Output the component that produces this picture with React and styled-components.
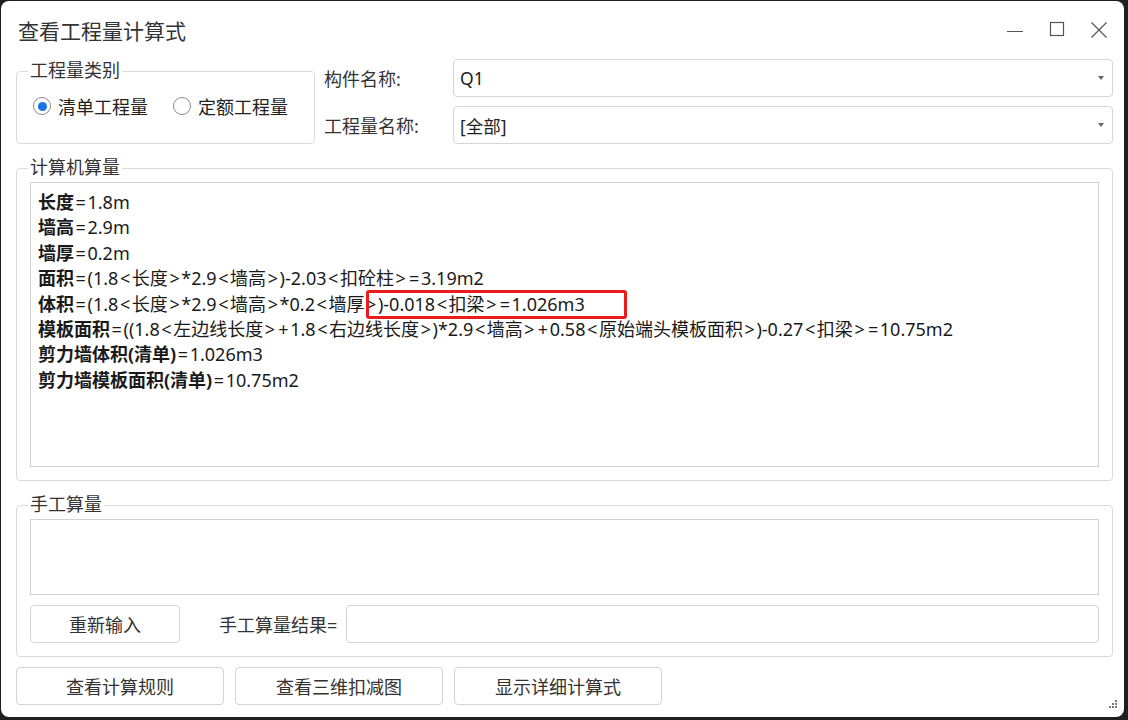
import React from "react"
import styled, { createGlobalStyle } from "styled-components"

const GlobalStyle = createGlobalStyle`
  html, body {
    margin: 0;
    padding: 0;
    background: #1f1f1f;
  }
  body {
    font-family: "Noto Sans", "Noto Sans CJK SC", sans-serif;
    color: #222;
  }
  * {
    box-sizing: border-box;
  }
`

const Window = styled.div`
  margin: 1px 0 0 1px;
  width: 1123px;
  height: 716px;
  background: #fff;
  border-radius: 8px;
  display: flex;
  flex-direction: column;
  position: relative;
  overflow: hidden;
`

const TitleBar = styled.div`
  height: 58px;
  display: flex;
  align-items: center;
  padding-left: 17px;
`

const Title = styled.div`
  flex: 1;
  font-size: 21px;
  color: #333;
`

const Controls = styled.div`
  display: flex;
  align-items: center;
  height: 100%;
  padding-right: 4px;
`

const ControlButton = styled.div`
  width: 42px;
  height: 100%;
  display: flex;
  align-items: center;
  justify-content: center;
  color: #555;
`

const Body = styled.div`
  flex: 1;
  display: flex;
  flex-direction: column;
  padding: 0 11px 0 15px;
`

const TopRow = styled.div`
  display: flex;
  height: 85px;
`

const GroupBox = styled.div`
  position: relative;
  border: 1px solid #dadada;
  border-radius: 4px;
  margin-top: ${p => p.$top || 0}px;
  width: ${p => (p.$width ? `${p.$width}px` : "auto")};
  height: ${p => p.$height}px;
  padding: 13px;
  display: flex;
  flex-direction: column;
  gap: 10px;
`

const Legend = styled.span`
  position: absolute;
  top: -13px;
  left: 11px;
  padding: 0 2px;
  background: #fff;
  font-size: 18px;
  line-height: 22px;
  color: #333;
`

const RadioRow = styled.div`
  display: flex;
  align-items: center;
  gap: 25px;
  padding: 8px 0 0 3px;
`

const RadioLabel = styled.label`
  display: flex;
  align-items: center;
  gap: 7px;
  font-size: 18px;
  color: #222;
`

const RadioCircle = styled.span`
  width: 18px;
  height: 18px;
  border-radius: 50%;
  border: 1.5px solid #8a8a8a;
  display: flex;
  align-items: center;
  justify-content: center;
  &::after {
    content: "";
    width: 9px;
    height: 9px;
    border-radius: 50%;
    background: ${p => (p.$on ? "#1a73e8" : "transparent")};
  }
`

const FieldGrid = styled.div`
  flex: 1;
  margin-left: 9px;
  display: grid;
  grid-template-columns: 129px 1fr;
  grid-auto-rows: 38px;
  row-gap: 9px;
  align-items: center;
`

const FieldLabel = styled.span`
  font-size: 18px;
  color: #333;
`

const Combo = styled.div`
  height: 38px;
  border: 1px solid #d6d6d6;
  border-radius: 4px;
  display: flex;
  align-items: center;
  padding: 0 8px 0 6px;
  font-size: 17.5px;
  color: #222;
`

const ComboText = styled.span`
  flex: 1;
`

const Arrow = styled.span`
  width: 0;
  height: 0;
  border-left: 3.5px solid transparent;
  border-right: 3.5px solid transparent;
  border-top: 4px solid #666;
`

const Spacer = styled.div`
  height: ${p => p.$h}px;
  flex-shrink: 0;
`

const TextArea = styled.div`
  position: relative;
  border: 1px solid #d2d2d2;
  height: ${p => p.$height}px;
  padding: 7px 7px;
  font-size: 18px;
  line-height: 25.4px;
  color: #1a1a1a;
`

const Line = styled.div`
  white-space: nowrap;
`

const Bold = styled.b`
  font-weight: 700;
`

const Op = styled.span`
  margin: 0 1.6px;
`

const Highlight = styled.div`
  position: absolute;
  left: 335px;
  top: 107px;
  width: 261px;
  height: 29px;
  border: 3px solid #ec1c1c;
  border-radius: 3px;
`

const ActionRow = styled.div`
  display: flex;
  align-items: center;
  height: 38px;
`

const Button = styled.div`
  width: ${p => p.$width}px;
  height: 38px;
  border: 1px solid #d4d4d4;
  border-radius: 4px;
  display: flex;
  align-items: center;
  justify-content: center;
  font-size: 18px;
  color: #333;
  background: #fff;
  flex-shrink: 0;
`

const ResultLabel = styled.span`
  margin: 0 9px 0 39px;
  font-size: 18px;
  color: #333;
`

const Input = styled.div`
  flex: 1;
  height: 38px;
  border: 1px solid #d4d4d4;
  border-radius: 4px;
`

const ButtonRow = styled.div`
  display: flex;
  gap: 11px;
`

const Grip = styled.svg`
  position: absolute;
  right: 6px;
  bottom: 6px;
`

const lines = [
  ["长度", "=1.8m"],
  ["墙高", "=2.9m"],
  ["墙厚", "=0.2m"],
  ["面积", "=(1.8<长度>*2.9<墙高>)-2.03<扣砼柱>=3.19m2"],
  ["体积", "=(1.8<长度>*2.9<墙高>*0.2<墙厚>)-0.018<扣梁>=1.026m3"],
  ["模板面积", "=((1.8<左边线长度>+1.8<右边线长度>)*2.9<墙高>+0.58<原始端头模板面积>)-0.27<扣梁>=10.75m2"],
  ["剪力墙体积(清单)", "=1.026m3"],
  ["剪力墙模板面积(清单)", "=10.75m2"],
]

const Formula = ({ text }) =>
  text.split(/([<>=+])/).map((part, i) =>
    /^[<>=+]$/.test(part) ? <Op key={i}>{part}</Op> : part
  )

export default function App() {
  return (
    <>
      <GlobalStyle />
      <Window>
        <TitleBar>
          <Title>查看工程量计算式</Title>
          <Controls>
            <ControlButton>
              <svg width="18" height="18" viewBox="0 0 18 18">
                <line x1="1" y1="10.5" x2="17" y2="10.5" stroke="#555" strokeWidth="1.2" />
              </svg>
            </ControlButton>
            <ControlButton>
              <svg width="18" height="18" viewBox="0 0 18 18">
                <rect x="2.5" y="1.5" width="13" height="13" fill="none" stroke="#555" strokeWidth="1.2" />
              </svg>
            </ControlButton>
            <ControlButton>
              <svg width="18" height="18" viewBox="0 0 18 18">
                <path d="M1.5 1.5 L16.5 16.5 M16.5 1.5 L1.5 16.5" stroke="#555" strokeWidth="1.2" />
              </svg>
            </ControlButton>
          </Controls>
        </TitleBar>
        <Body>
          <TopRow>
            <GroupBox $top={12} $width={299} $height={73}>
              <Legend>工程量类别</Legend>
              <RadioRow>
                <RadioLabel>
                  <RadioCircle $on />
                  清单工程量
                </RadioLabel>
                <RadioLabel>
                  <RadioCircle />
                  定额工程量
                </RadioLabel>
              </RadioRow>
            </GroupBox>
            <FieldGrid>
              <FieldLabel>构件名称:</FieldLabel>
              <Combo>
                <ComboText>Q1</ComboText>
                <Arrow />
              </Combo>
              <FieldLabel>工程量名称:</FieldLabel>
              <Combo>
                <ComboText>[全部]</ComboText>
                <Arrow />
              </Combo>
            </FieldGrid>
          </TopRow>
          <Spacer $h={24} />
          <GroupBox $height={313}>
            <Legend>计算机算量</Legend>
            <TextArea $height={285}>
              {lines.map(([k, v]) => (
                <Line key={k}>
                  <Bold>{k}</Bold>
                  <Formula text={v} />
                </Line>
              ))}
              <Highlight />
            </TextArea>
          </GroupBox>
          <Spacer $h={24} />
          <GroupBox $height={152}>
            <Legend>手工算量</Legend>
            <TextArea $height={76} />
            <ActionRow>
              <Button $width={150}>重新输入</Button>
              <ResultLabel>手工算量结果=</ResultLabel>
              <Input />
            </ActionRow>
          </GroupBox>
          <Spacer $h={10} />
          <ButtonRow>
            <Button $width={208}>查看计算规则</Button>
            <Button $width={208}>查看三维扣减图</Button>
            <Button $width={208}>显示详细计算式</Button>
          </ButtonRow>
        </Body>
        <Grip width="12" height="12" viewBox="0 0 12 12">
          <g fill="#777">
            <rect x="9" y="1" width="2" height="2" />
            <rect x="6" y="4" width="2" height="2" />
            <rect x="9" y="4" width="2" height="2" />
            <rect x="3" y="7" width="2" height="2" />
            <rect x="6" y="7" width="2" height="2" />
            <rect x="9" y="7" width="2" height="2" />
          </g>
        </Grip>
      </Window>
    </>
  )
}
